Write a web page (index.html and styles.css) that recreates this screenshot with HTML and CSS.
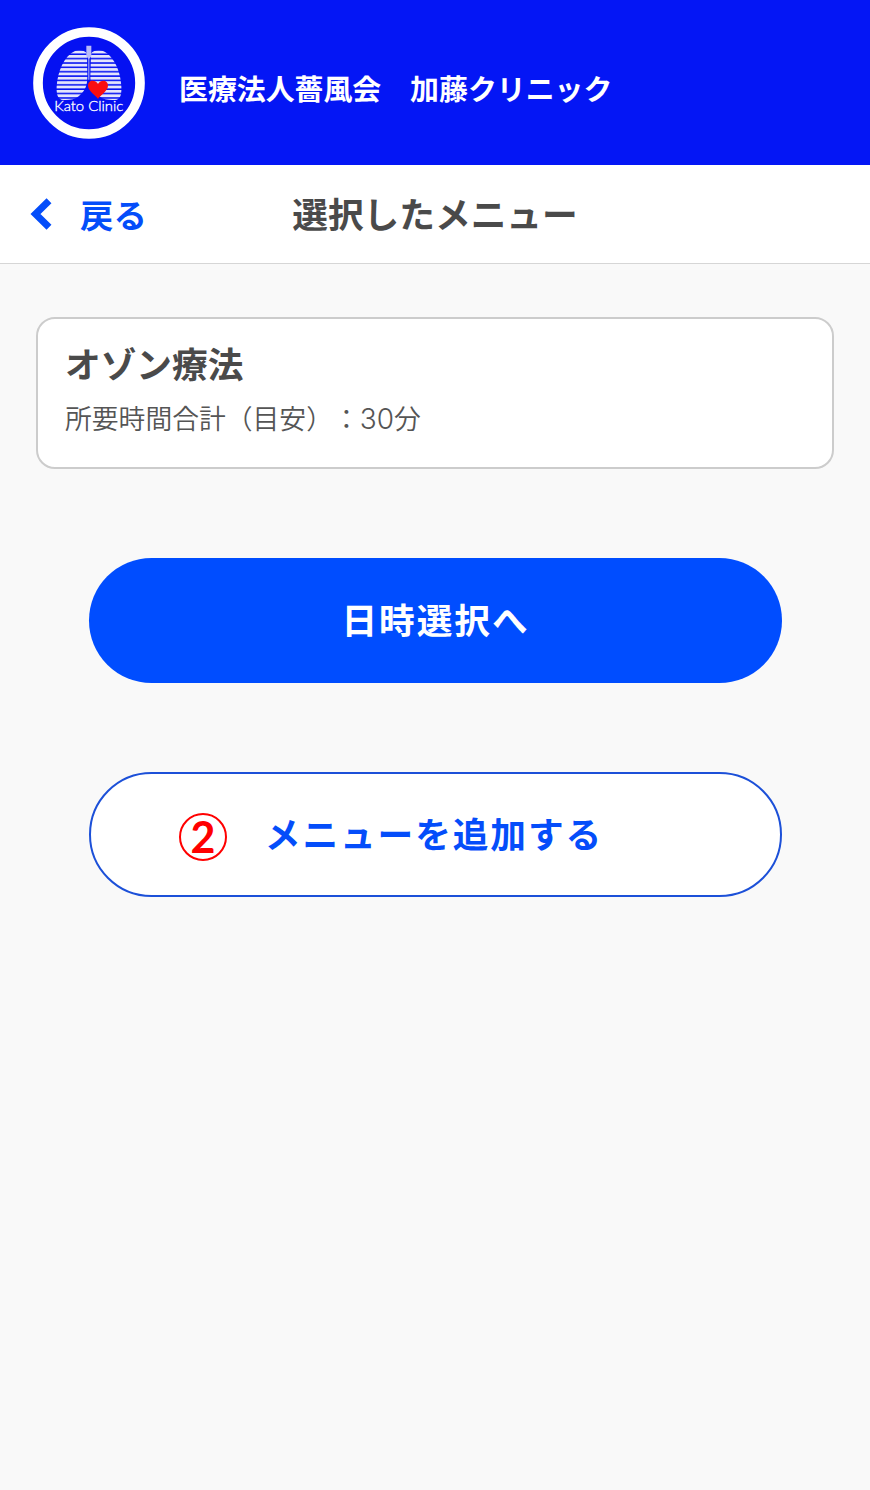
FILE: index.html
```html
<!DOCTYPE html>
<html lang="ja">
  <head>
    <meta charset="UTF-8" />
    <meta name="viewport" content="width=device-width, initial-scale=1.0" />
    <title>選択したメニュー</title>
    <link rel="stylesheet" href="styles.css">
  </head>
  <body>
    <header class="header">
      <svg class="logo" viewBox="25 27 336 336" role="img" aria-label="Kato Clinic">
        <defs>
          <pattern id="stripes" x="0" y="98" width="20" height="13.1" patternUnits="userSpaceOnUse">
            <rect width="20" height="8.5" fill="#e4e4fc" />
          </pattern>
        </defs>
        <circle cx="193" cy="195" r="153" fill="#0511f2" stroke="#fff" stroke-width="29" />
        <!-- lungs -->
        <path d="M187 107C180 97 163 95 151 99C118 114 99 160 96 205C95 226 98 240 110 245C124 248 149 246 163 234C183 217 188 201 188 175Z" fill="url(#stripes)" />
        <path d="M199 107C206 97 223 95 235 99C268 114 288 160 290 205C291 226 289 240 277 245C263 248 237 246 223 234C203 217 197 201 197 175Z" fill="url(#stripes)" />
        <path d="M185 83H200V115L194 122V185H191V122L185 115Z" fill="#b9baf8" />
        <path d="M220 243C214 231 191 221 190 203C190 186 211 183 220 198C229 183 250 186 250 203C249 221 226 231 220 243Z" fill="#fb0d10" />
        <text class="logo-text" x="89" y="280" textLength="207" lengthAdjust="spacingAndGlyphs">Kato Clinic</text>
      </svg>
      <p class="clinic-name">医療法人薔風会　加藤クリニック</p>
    </header>

    <nav class="nav">
      <a class="back" href="#">
        <svg class="back-icon" viewBox="0 0 22 32" aria-hidden="true">
          <path d="M19 2.8L5.5 16L19 29.2" fill="none" stroke="#044dfa" stroke-width="7" />
        </svg>
        <span>戻る</span>
      </a>
      <h1 class="title">選択したメニュー</h1>
    </nav>

    <main class="main">
      <section class="card">
        <h2 class="menu-name">オゾン療法</h2>
        <p class="duration">所要時間合計（目安）：<span class="num">30</span>分</p>
      </section>

      <div class="buttons">
        <a class="btn btn-primary" href="#">日時選択へ</a>
        <a class="btn btn-outline" href="#">
          メニューを追加する
          <span class="step">2</span>
        </a>
      </div>
    </main>
  </body>
</html>
```

FILE: styles.css
```css
* {
  box-sizing: border-box;
}

body {
  margin: 0;
  min-height: 1490px;
  background-color: #f9f9f9;
  color: #4a4a4a;
  font-family: "Noto Sans CJK JP", sans-serif;
  text-spacing-trim: space-all;
}

h1,
h2,
p {
  margin: 0;
}

a {
  color: #044dfa;
  text-decoration: none;
}

/* Header */
.header {
  display: flex;
  align-items: center;
  gap: 34px;
  height: 165px;
  padding: 0 33px;
  background-color: #0416f5;
}

.logo {
  width: 112px;
  height: 112px;
}

.logo-text {
  font-family: Lato, sans-serif;
  font-size: 39px;
  font-weight: 300;
  fill: #fff;
  stroke: #fff;
  stroke-width: 0.9px;
}

.clinic-name {
  padding-top: 9px;
  color: #fff;
  font-size: 28.9px;
  font-weight: 700;
  line-height: 40px;
}

/* Navigation bar */
.nav {
  display: grid;
  grid-template-columns: 1fr auto 1fr;
  align-items: center;
  height: 99px;
  padding: 0 30px;
  background-color: #fff;
  border-bottom: 1px solid #d6d6d6;
}

.back {
  display: flex;
  align-items: center;
  gap: 28px;
  font-size: 33.4px;
  font-weight: 700;
  line-height: 48px;
}

.back-icon {
  width: 22px;
  height: 32px;
}

.title {
  padding-bottom: 2px;
  font-size: 35.7px;
  font-weight: 700;
  line-height: 48px;
}

/* Selected menu */
.main {
  padding: 53px 36px 0;
}

.card {
  height: 152px;
  padding: 19px 27px;
  background-color: #fff;
  border: 2px solid #ccc;
  border-radius: 19px;
}

.menu-name {
  font-size: 35.7px;
  font-weight: 700;
  line-height: 50px;
}

.duration {
  margin-top: 8px;
  color: #555;
  font-size: 26.8px;
  font-weight: 350;
  line-height: 44px;
}

.num {
  font-family: Inter, sans-serif;
  font-size: 28px;
  font-weight: 350;
}

/* Buttons */
.buttons {
  display: flex;
  flex-direction: column;
  gap: 89px;
  padding: 89px 52px 0 53px;
}

.btn {
  position: relative;
  display: flex;
  align-items: center;
  justify-content: center;
  height: 125px;
  padding-bottom: 4px;
  border-radius: 63px;
  font-size: 35.7px;
  font-weight: 700;
  letter-spacing: 1.9px;
}

.btn-primary {
  background-color: #004dff;
  color: #fff;
}

.btn-outline {
  padding-right: 3px;
  background-color: #fff;
  border: 2px solid #1c50d8;
}

/* Step number shown over the button */
.step {
  position: absolute;
  top: 39px;
  left: 88px;
  display: flex;
  align-items: center;
  justify-content: center;
  width: 48px;
  height: 48px;
  padding-bottom: 2px;
  border: 2px solid #f00;
  border-radius: 50%;
  color: #f00;
  font-family: Lato, sans-serif;
  font-size: 43px;
  font-weight: 700;
  letter-spacing: 0;
  line-height: 1;
}
```
